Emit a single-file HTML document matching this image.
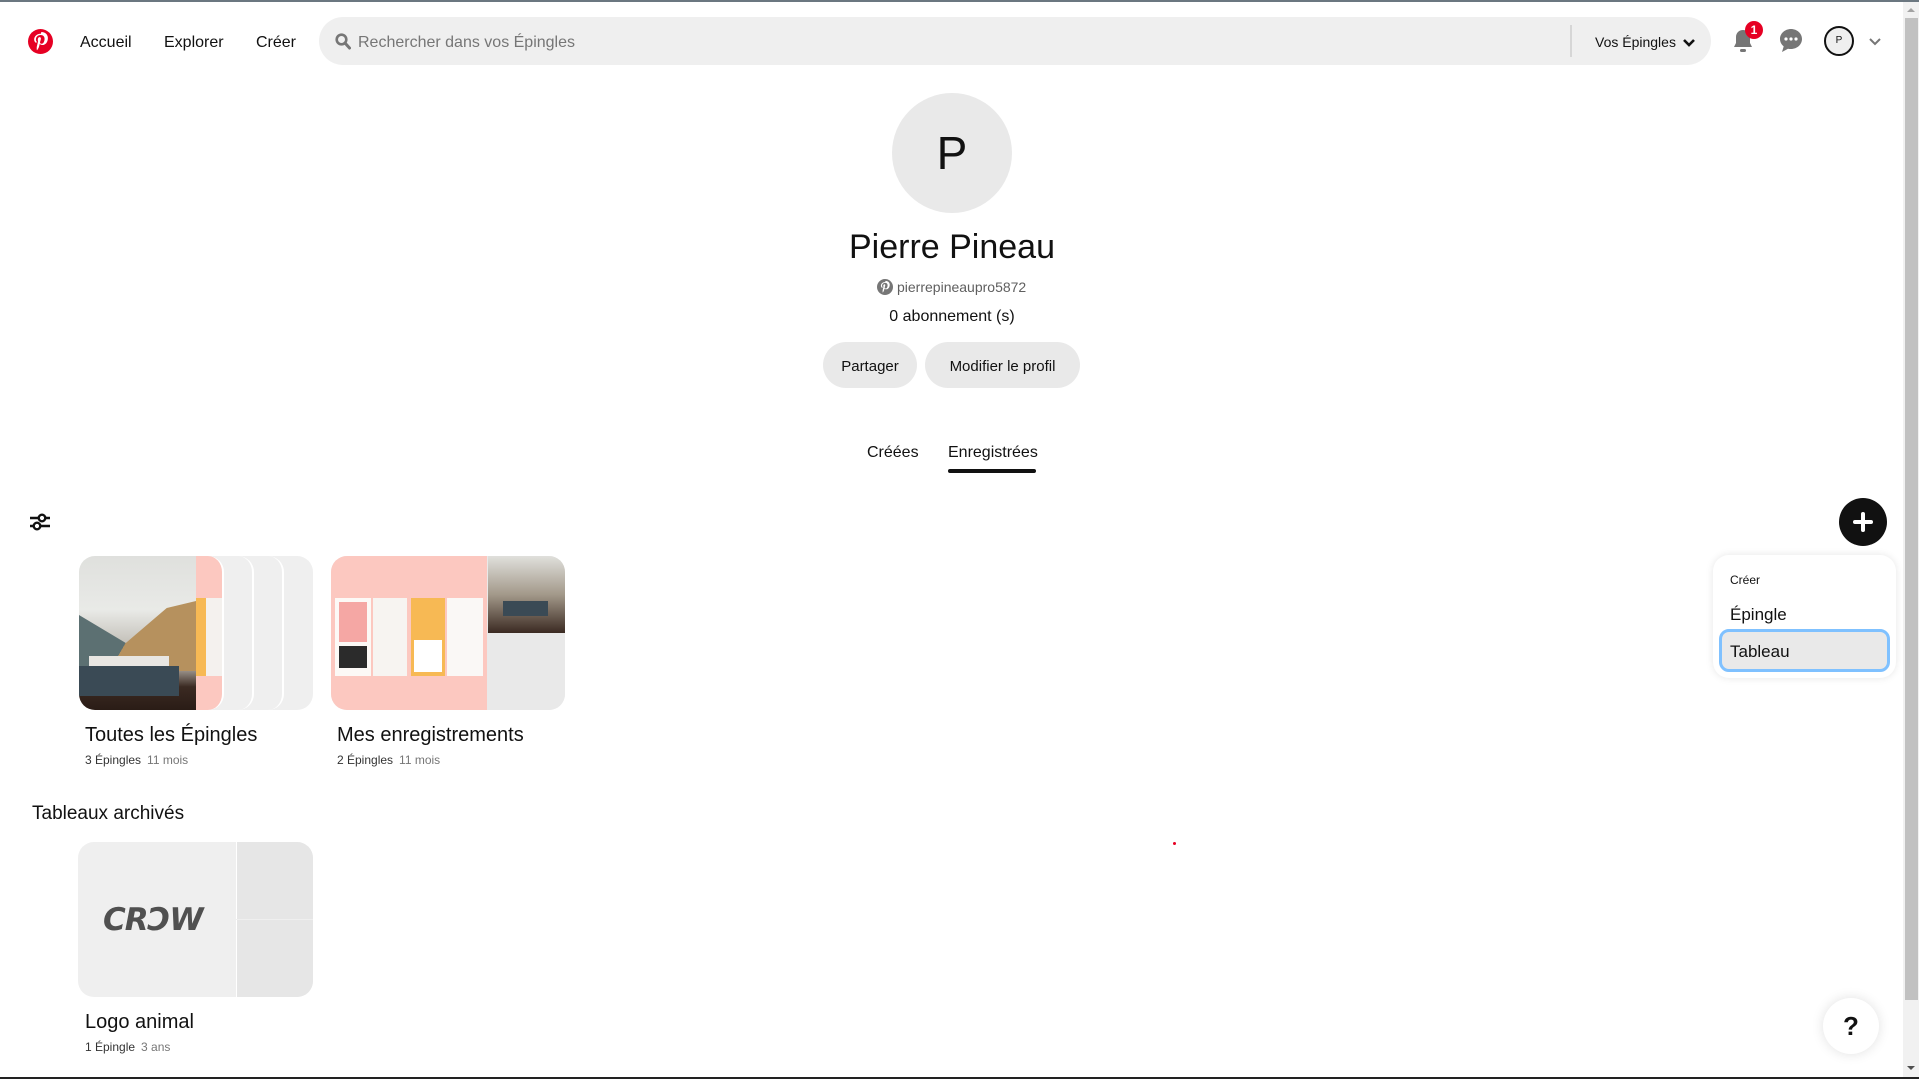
<!DOCTYPE html>
<html><head><meta charset="utf-8"><style>
*{margin:0;padding:0;box-sizing:border-box}
body{width:1919px;height:1079px;overflow:hidden;background:#fff;font-family:"Liberation Sans",sans-serif;color:#111;position:relative}
.a{position:absolute}
.nav{font-size:16px;font-weight:500;color:#111;top:34px}
.btn{background:#e9e9e9;border-radius:24px;font-size:15px;display:flex;align-items:center;justify-content:center;color:#111}
.t{font-size:20px;color:#111}
.m{font-size:12px;color:#333}
.m span{color:#767676;margin-left:6px}
</style></head><body>
<div class="a" style="left:0;top:0;width:1919px;height:2px;background:#6b7780"></div>
<svg class="a" style="left:28px;top:29px" width="25" height="25" viewBox="0 0 24 24"><circle cx="12" cy="12" r="12" fill="#e60023"/><path d="M12.3 4.5c-4.2 0-6.4 3-6.4 5.5 0 1.5.6 2.8 1.8 3.3.2.1.4 0 .4-.2l.2-.7c.1-.2 0-.3-.1-.5-.4-.4-.6-1-.6-1.8 0-2.3 1.7-4.3 4.5-4.300 2.4 0 3.8 1.5 3.8 3.5 0 2.6-1.2 4.9-2.9 4.9-1 0-1.700-.8-1.4-1.8.3-1.1.8-2.4.8-3.2 0-.7-.4-1.4-1.2-1.4-1 0-1.8 1-1.8 2.4 0 .9.3 1.4.3 1.4l-1.2 5.1c-.3 1.5 0 3.4 0 3.6h.3c.1-.2 1.4-1.8 1.8-3.4l.7-2.7c.3.7 1.4 1.2 2.4 1.2 3.2 0 5.4-2.9 5.4-6.8 0-3-2.5-5.7-6.3-5.7z" fill="#fff"/></svg>
<div class="a nav" style="left:80px">Accueil</div>
<div class="a nav" style="left:164px">Explorer</div>
<div class="a nav" style="left:256px">Créer</div>
<div class="a" style="left:319px;top:17px;width:1392px;height:48px;background:#efefef;border-radius:24px"></div>
<svg class="a" style="left:335px;top:33px" width="16" height="17" viewBox="0 0 16 17"><circle cx="6.5" cy="6.5" r="4.8" fill="none" stroke="#767676" stroke-width="2.6"/><path d="M10 10l4.5 5" stroke="#767676" stroke-width="3" stroke-linecap="round"/></svg>
<div class="a" style="left:358px;top:34px;font-size:16px;color:#767676">Rechercher dans vos Épingles</div>
<div class="a" style="left:1570px;top:25px;width:2px;height:32px;background:#d6d6d6"></div>
<div class="a" style="left:1595px;top:34px;font-size:14px;color:#111">Vos Épingles</div>
<svg class="a" style="left:1682px;top:38px" width="14" height="10" viewBox="0 0 14 10"><path d="M2 2l5 5 5-5" fill="none" stroke="#111" stroke-width="2.6"/></svg>
<svg class="a" style="left:1731px;top:28px" width="24" height="26" viewBox="0 0 24 26"><path d="M12 2c-4 0-7 3-7 7v6l-2 4h18l-2-4V9c0-4-3-7-7-7z" fill="#767676"/><rect x="9" y="21" width="6" height="3" rx="1.5" fill="#767676"/></svg>
<div class="a" style="left:1745px;top:21px;width:18px;height:18px;border-radius:50%;background:#e60023;color:#fff;font-size:12px;font-weight:bold;text-align:center;line-height:18px">1</div>
<svg class="a" style="left:1779px;top:28px" width="24" height="26" viewBox="0 0 24 26"><path d="M12 1C5.9 1 1 5.5 1 11c0 3 1.4 5.6 3.7 7.4L3 24l6-3.3c.9.2 1.9.3 3 .3 6.1 0 11-4.5 11-10S18.1 1 12 1z" fill="#767676"/><circle cx="7" cy="11" r="1.6" fill="#fff"/><circle cx="12" cy="11" r="1.6" fill="#fff"/><circle cx="17" cy="11" r="1.6" fill="#fff"/></svg>
<div class="a" style="left:1824px;top:26px;width:30px;height:30px;border:2px solid #111;border-radius:50%;background:#efefef;font-size:10px;text-align:center;line-height:26px">P</div>
<svg class="a" style="left:1868px;top:37px" width="14" height="9" viewBox="0 0 14 9"><path d="M2 2l5 5 5-5" fill="none" stroke="#767676" stroke-width="2"/></svg>
<div class="a" style="left:1903px;top:2px;width:16px;height:1077px;background:#f1f1f1"></div>
<div class="a" style="left:1905px;top:18px;width:13px;height:982px;background:#c1c1c1"></div>
<div class="a" style="left:1907px;top:8px;width:0;height:0;border-left:4px solid transparent;border-right:4px solid transparent;border-bottom:4px solid #a3a3a3"></div>
<div class="a" style="left:1907px;top:1066px;width:0;height:0;border-left:4px solid transparent;border-right:4px solid transparent;border-top:4px solid #505050"></div>
<div class="a" style="left:0;top:1077px;width:1919px;height:2px;background:#222"></div>
<div class="a" style="left:892px;top:93px;width:120px;height:120px;border-radius:50%;background:#e9e9e9;font-size:46px;text-align:center;line-height:120px;color:#111">P</div>
<div class="a" style="left:700px;top:228px;width:504px;text-align:center;font-size:34px;color:#111">Pierre Pineau</div>
<svg class="a" style="left:877px;top:279px" width="16" height="16" viewBox="0 0 24 24"><circle cx="12" cy="12" r="12" fill="#767676"/><path d="M12.3 4.5c-4.2 0-6.4 3-6.4 5.5 0 1.5.6 2.8 1.8 3.3.2.1.4 0 .4-.2l.2-.7c.1-.2 0-.3-.1-.5-.4-.4-.6-1-.6-1.8 0-2.3 1.7-4.3 4.5-4.3 2.4 0 3.8 1.5 3.8 3.5 0 2.6-1.2 4.9-2.9 4.9-1 0-1.7-.8-1.4-1.8.3-1.1.8-2.4.8-3.2 0-.7-.4-1.4-1.2-1.4-1 0-1.8 1-1.8 2.4 0 .9.3 1.4.3 1.4l-1.2 5.1c-.3 1.5 0 3.4 0 3.6h.3c.1-.2 1.4-1.8 1.8-3.4l.7-2.7c.3.7 1.4 1.2 2.4 1.2 3.2 0 5.4-2.9 5.4-6.8 0-3-2.5-5.7-6.3-5.7z" fill="#fff"/></svg>
<div class="a" style="left:897px;top:279px;font-size:14px;color:#5f5f5f">pierrepineaupro5872</div>
<div class="a" style="left:800px;top:308px;width:304px;text-align:center;font-size:16px;color:#111">0 abonnement (s)</div>
<div class="a btn" style="left:823px;top:342px;width:94px;height:46px;padding-top:3px">Partager</div>
<div class="a btn" style="left:925px;top:342px;width:155px;height:46px;padding-top:3px">Modifier le profil</div>
<div class="a" style="left:867px;top:444px;font-size:16px">Créées</div>
<div class="a" style="left:948px;top:444px;font-size:16px">Enregistrées</div>
<div class="a" style="left:948px;top:469px;width:88px;height:4px;border-radius:2px;background:#111"></div>
<svg class="a" style="left:29px;top:512px" width="22" height="20" viewBox="0 0 22 20"><path d="M1 6h20M1 14h20" stroke="#111" stroke-width="2.6"/><circle cx="13" cy="6" r="3.3" fill="#fff" stroke="#111" stroke-width="2.4"/><circle cx="8" cy="14" r="3.3" fill="#fff" stroke="#111" stroke-width="2.4"/></svg>
<div class="a" style="left:1839px;top:498px;width:48px;height:48px;border-radius:50%;background:#111"></div>
<div class="a" style="left:1853px;top:520px;width:20px;height:4px;background:#fff;border-radius:2px"></div>
<div class="a" style="left:1861px;top:512px;width:4px;height:20px;background:#fff;border-radius:2px"></div>
<div class="a" style="left:1713px;top:555px;width:183px;height:123px;background:#fff;border-radius:16px;box-shadow:0 0 8px rgba(0,0,0,.1)"></div>
<div class="a" style="left:1730px;top:573px;font-size:12px">Créer</div>
<div class="a" style="left:1730px;top:605px;font-size:17px">Épingle</div>
<div class="a" style="left:1719px;top:629px;width:171px;height:43px;border-radius:10px;background:#e9e9e9;border:3px solid #7fc1ff"></div>
<div class="a" style="left:1730px;top:642px;font-size:17px">Tableau</div>
<div class="a" style="left:250px;top:556px;width:63px;height:154px;background:#efefef;border-radius:16px;border-left:2px solid #fff"></div>
<div class="a" style="left:220px;top:556px;width:64px;height:154px;background:#efefef;border-radius:16px;border-right:2px solid #fff"></div>
<div class="a" style="left:190px;top:556px;width:64px;height:154px;background:#efefef;border-radius:16px;border-right:2px solid #fff"></div>
<div class="a" style="left:160px;top:556px;width:64px;height:154px;background:#fcc8c0;border-radius:16px;border-right:2px solid #fff;overflow:hidden"><div style="position:absolute;left:36px;top:42px;width:10px;height:78px;background:#f7b954"></div><div style="position:absolute;left:46px;top:42px;width:18px;height:78px;background:#f4f1ee"></div></div>
<div class="a" style="left:79px;top:556px;width:117px;height:154px;border-radius:16px 0 0 16px;overflow:hidden;background:linear-gradient(#dfe0dd 0,#e9eae7 35%,#c7c4bd 55%,#c0bbb3 70%,#3b2a22 85%,#2a1c16 100%)">
<div style="position:absolute;left:0;top:45px;width:117px;height:70px;background:linear-gradient(120deg,#5c7072 0 45%,#b6915e 45% 100%);clip-path:polygon(0 20%,40% 60%,75% 10%,100% 0,100% 100%,0 100%)"></div>
<div style="position:absolute;left:10px;top:100px;width:80px;height:20px;background:#e8e6e2"></div>
<div style="position:absolute;left:0;top:110px;width:100px;height:30px;background:#3a4a55"></div>
</div>
<div class="a t" style="left:85px;top:724px">Toutes les Épingles</div>
<div class="a m" style="left:85px;top:753px">3 Épingles<span>11 mois</span></div>
<div class="a" style="left:331px;top:556px;width:234px;height:154px;border-radius:16px;overflow:hidden;background:#e9e9e9">
<div style="position:absolute;left:0;top:0;width:156px;height:154px;background:#fcc8c0">
<div style="position:absolute;left:4px;top:42px;width:36px;height:78px;background:#fcf9f6"><div style="margin:4px;height:40px;background:#f5a7a4"></div><div style="margin:4px;height:22px;background:#2b2b2b"></div></div>
<div style="position:absolute;left:42px;top:42px;width:34px;height:78px;background:#f7f4f1"></div>
<div style="position:absolute;left:80px;top:42px;width:34px;height:78px;background:#f7b954"><div style="margin:42px 3px 0;height:32px;background:#fff"></div></div>
<div style="position:absolute;left:116px;top:42px;width:36px;height:78px;background:#faf8f6"></div>
</div>
<div style="position:absolute;left:157px;top:0;width:77px;height:77px;background:linear-gradient(#e0e0dc,#a3998a 50%,#3b2a22)"><div style="position:absolute;left:15px;top:45px;width:45px;height:15px;background:#3a4a55"></div></div>
<div style="position:absolute;left:157px;top:78px;width:77px;height:76px;background:#e9e9e9"></div>
</div>
<div class="a t" style="left:337px;top:724px">Mes enregistrements</div>
<div class="a m" style="left:337px;top:753px">2 Épingles<span>11 mois</span></div>
<div class="a" style="left:32px;top:803px;font-size:19px;font-weight:500">Tableaux archivés</div>
<div class="a" style="left:78px;top:842px;width:235px;height:155px;border-radius:16px;overflow:hidden;background:#efefef">
<div style="position:absolute;left:158px;top:0;width:77px;height:77px;background:#e6e6e6;border-left:1px solid #fff"></div>
<div style="position:absolute;left:158px;top:78px;width:77px;height:77px;background:#e6e6e6;border-left:1px solid #fff"></div>
<div style="position:absolute;left:25px;top:60px;font-size:31px;font-weight:900;font-style:italic;color:#505050;letter-spacing:-1px;font-family:'DejaVu Sans',sans-serif">CRƆW</div>
</div>
<div class="a t" style="left:85px;top:1011px">Logo animal</div>
<div class="a m" style="left:85px;top:1040px">1 Épingle<span>3 ans</span></div>
<div class="a" style="left:1173px;top:842px;width:3px;height:3px;background:#e60023;border-radius:50%"></div>
<div class="a" style="left:1823px;top:998px;width:56px;height:56px;border-radius:50%;background:#fff;box-shadow:0 0 12px rgba(0,0,0,.12);font-size:26px;font-weight:bold;text-align:center;line-height:56px">?</div>
</body></html>
